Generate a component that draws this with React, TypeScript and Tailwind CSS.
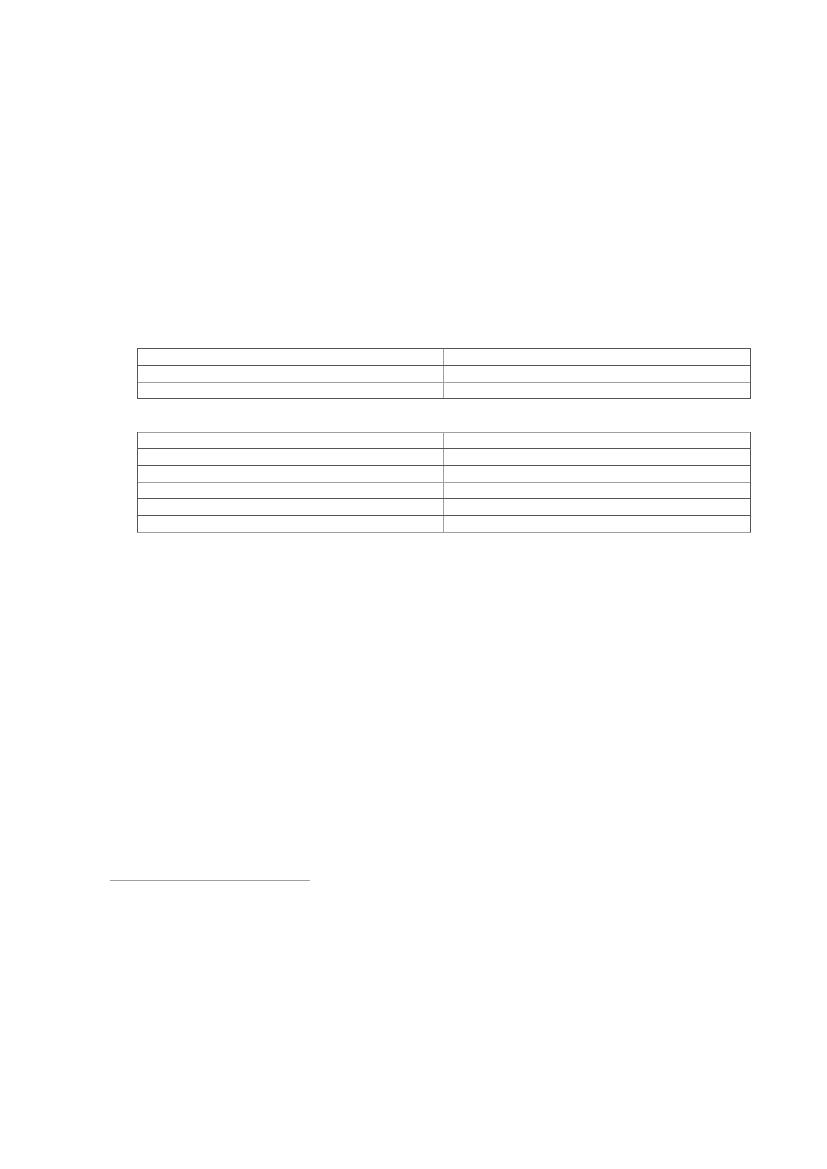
const dark = "border-[#555555]"
const light = "border-[#a0a0a0]"

type Row = { top: string; h: string }

const table1: Row[] = [
  { top: dark, h: "h-[17px]" },
  { top: dark, h: "h-[17px]" },
  { top: light, h: "h-[16px]" },
]
const table2: Row[] = [
  { top: light, h: "h-[16px]" },
  { top: dark, h: "h-[17px]" },
  { top: dark, h: "h-[17px]" },
  { top: light, h: "h-[16px]" },
  { top: dark, h: "h-[17px]" },
  { top: dark, h: "h-[17px]" },
]

function EmptyTable({ rows, bottom }: { rows: Row[]; bottom: string }) {
  return (
    <div className={`w-[614px] border-x border-x-[#555555] border-b ${bottom}`}>
      {rows.map((row, i) => (
        <div key={i} className={`grid grid-cols-[306px_1fr] border-t ${row.top} ${row.h}`}>
          <div className="border-r border-[#a0a0a0]" />
          <div />
        </div>
      ))}
    </div>
  )
}

export default function App() {
  return (
    <div className="w-[827px] h-[1169px] bg-white font-['Liberation_Serif',serif] flex flex-col">
      <div className="pt-[348px] pl-[137px] flex flex-col gap-[33px]">
        <EmptyTable rows={table1} bottom="border-b-[#555555]" />
        <EmptyTable rows={table2} bottom="border-b-[#a0a0a0]" />
      </div>
      {/* footnote rule */}
      <div className="mt-[347px] ml-[110px] w-[200px] h-px bg-[#a0a0a0]" />
    </div>
  )
}
